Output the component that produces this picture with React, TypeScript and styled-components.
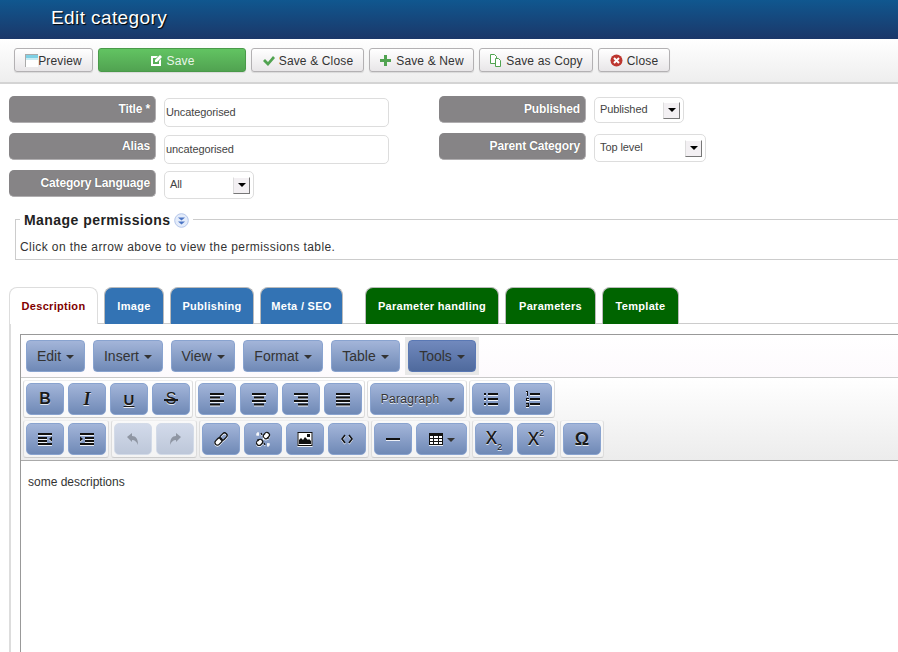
import React from "react";
import styled, { createGlobalStyle } from "styled-components";

const Global = createGlobalStyle`
  html, body { margin: 0; padding: 0; background: #fff; overflow: hidden; }
  body { font-family: "Liberation Sans", Arial, sans-serif; }
`;

const Page = styled.div`
  width: 898px; height: 652px; overflow: hidden; background: #fff;
  svg { flex-shrink: 0; }
`;
const Header = styled.header`
  height: 39px; display: flex; align-items: center; padding: 0 0 4px 51px; box-sizing: border-box;
  background: linear-gradient(#10578f, #1b3769);
`;
const Title = styled.h1`
  margin: 0; color: #fff; font-size: 19px; font-weight: normal; letter-spacing: .4px;
  text-shadow: 1px 1px 1px #000;
`;
const Toolbar = styled.div`
  height: 45px; box-sizing: border-box; padding: 9px 0 0 14px; display: flex; gap: 5px; align-items: flex-start;
  background: linear-gradient(#fff, #eee); border-bottom: 2px solid #d4d4d4;
`;
const ActionButton = styled.button<{ $primary?: boolean; $width: number }>`
  height: 24px; box-sizing: border-box; padding: 1px 0 0; display: inline-flex; align-items: center; justify-content: center; gap: 4px;
  width: ${p => p.$width}px; white-space: nowrap;
  font: 12px "Liberation Sans", Arial, sans-serif; letter-spacing: .15px;
  border-radius: 3px; box-shadow: 0 1px 1px rgba(0,0,0,.1);
  color: ${p => (p.$primary ? "#e8f5e8" : "#333")};
  border: 1px solid ${p => (p.$primary ? "#4a9a4a" : "#b3b1b3")};
  background: ${p => (p.$primary ? "linear-gradient(#62c462, #51a351)" : "linear-gradient(#fff, #e8e6e8)")};
`;
const PreviewButton = styled(ActionButton)`
  gap: 0;
`;
const Form = styled.div`
  padding-top: 12px; display: grid; grid-template-columns: 430px 1fr; padding-left: 9px;
`;
const Column = styled.div`
  display: flex; flex-direction: column;
`;
const Field = styled.div`
  height: 37px; display: flex; gap: 8px; align-items: flex-start;
`;
const Label = styled.label`
  width: 147px; height: 27px; box-sizing: border-box; padding: 0 5px 1px 0; display: flex; align-items: center; justify-content: flex-end;
  background: #868486; border: 1px solid #b0aeb0; border-width: 0 1px 1px 0; border-radius: 5px;
  color: #fff; font-size: 12px; font-weight: bold; letter-spacing: -.15px; text-shadow: 0 0 1px rgba(0,0,0,.4);
`;
const Input = styled.input`
  width: 225px; height: 29px; box-sizing: border-box; margin-top: 2px; padding: 0 1px 2px; outline: none;
  border: 1px solid #ddd; border-radius: 5px; color: #444; background: #fff;
  font: 11px "Liberation Sans", Arial, sans-serif; letter-spacing: -.1px;
`;
const Select = styled.div<{ $width: number; $height: number; $top: number }>`
  width: ${p => p.$width}px; height: ${p => p.$height}px; margin-top: ${p => p.$top}px; box-sizing: border-box;
  padding: 0 3px 0 5px; display: flex; align-items: center; justify-content: space-between;
  border: 1px solid #ddd; border-radius: 5px; color: #444; background: #fff; font-size: 11px; letter-spacing: -.1px;
`;
const SelectLabel = styled.span`
  margin-top: -2px;
`;
const SelectArrow = styled.span`
  width: 17px; height: 17px; box-sizing: border-box; display: flex; align-items: center; justify-content: center;
  background: #f3f0f3; border: 1px solid; border-color: #fff #777 #777 #ddd;
  &::after { content: ""; border: 4px solid transparent; border-top: 4px solid #000; border-bottom: 0; }
`;
const Permissions = styled.fieldset`
  margin: 2px 0 0 15px; padding: 11px 4px 0 4px; width: 1000px; box-sizing: border-box;
  border: 1px solid #ccc; height: 51px;
`;
const Legend = styled.legend`
  padding: 2px 4px 0; box-sizing: border-box; margin-left: 0; display: flex; align-items: center; gap: 3px; height: 20px;
  font-size: 14px; font-weight: bold; color: #222; letter-spacing: .45px;
`;
const Hint = styled.p`
  margin: 0; font-size: 12px; color: #333; letter-spacing: .41px;
`;
const Tabs = styled.nav`
  margin: 27px 0 0 9px; height: 37px; box-sizing: border-box; display: flex; gap: 6px; border-bottom: 1px solid #ccc;
`;
const Tab = styled.div<{ $bg?: string; $spaced?: boolean; $width: number }>`
  width: ${p => p.$width}px; height: 37px; box-sizing: border-box; display: flex; align-items: center; justify-content: center;
  margin-left: ${p => (p.$spaced ? 16 : 0)}px;
  padding-bottom: 1px;
  background: ${p => p.$bg ?? "#fff"}; color: ${p => (p.$bg ? "#fff" : "#800000")};
  border: 1px solid ${p => (p.$bg ? "#bbb" : "#ddd")}; border-bottom: 0; border-radius: 8px 8px 0 0;
  font-size: 11px; font-weight: bold; letter-spacing: .3px;
`;
const Panel = styled.div`
  margin-left: 9px; padding: 10px 0 0 10px; border-left: 2px solid #ddd; box-sizing: border-box; width: 1000px;
`;
const Editor = styled.div`
  margin-left: -1px; border: 1px solid #999;
`;
const MenuBar = styled.div`
  height: 43px; box-sizing: border-box; padding: 5px 0 0 5px; display: flex; gap: 8px; align-items: flex-start;
  background: linear-gradient(#fff, #fdfafd); border-bottom: 1px solid #c8c8c8;
`;
const MenuHighlight = styled.div`
  margin: -3px; padding: 3px; background: #e8e8e8;
`;
const MenuButton = styled.div<{ $active?: boolean; $width: number }>`
  width: ${p => p.$width}px; height: 32px; box-sizing: border-box; display: flex; align-items: center; justify-content: center; gap: 5px;
  font-size: 14px; color: #333; border-radius: 4px;
  border: 1px solid ${p => (p.$active ? "#5a78b4" : "#89a3cf")};
  background: ${p => (p.$active ? "linear-gradient(#7189bd, #4f6a9d)" : "linear-gradient(#a3b5d9, #6f89b6)")};
`;
const Caret = styled.span`
  display: inline-block; border: 4.500px solid transparent; border-top: 4px solid #333; border-bottom: 0; margin-top: 1px;
`;
const EditorTools = styled.div`
  padding: 2px 0 2px 2px; display: flex; flex-direction: column; gap: 2px;
  background: linear-gradient(#fff, #ececec); border-bottom: 1px solid #aaa;
`;
const ToolRow = styled.div`
  display: flex; gap: 2px;
`;
const ToolGroup = styled.div`
  display: flex; gap: 4px; padding: 2px; border: 1px solid #e2e2e2; border-color: #eee #ddd #ccc #ddd; border-radius: 3px;
  background: rgba(255,255,255,.4);
`;
const ToolButton = styled.div<{ $disabled?: boolean; $width?: number }>`
  width: ${p => p.$width ?? 38}px; height: 32px; box-sizing: border-box; display: flex; align-items: center; justify-content: center; gap: 4px;
  border-radius: 5px; color: #1a1a1a; 
  border: 1px solid ${p => (p.$disabled ? "#d3dbe8" : "#89a3cf")};
  background: ${p => (p.$disabled ? "linear-gradient(#d2daea, #bdc7d9)" : "linear-gradient(#a3b5d9, #6f89b6)")};
  font-size: 15px; text-shadow: 0 1px 0 rgba(255,255,255,.8);
  svg { filter: ${p => (p.$disabled ? "none" : "drop-shadow(0 1px 0 rgba(255,255,255,.85))")}; }
`;
const BoldGlyph = styled.span`
  font: bold 16px "Liberation Sans", Arial, sans-serif;
`;
const ItalicGlyph = styled.span`
  font: italic bold 18px "Liberation Serif", "Times New Roman", serif;
`;
const UnderGlyph = styled.span`
  font: bold 15px "Liberation Sans", Arial, sans-serif; text-decoration: underline;
`;
const StrikeGlyph = styled.span`
  font: 16px "Liberation Sans", Arial, sans-serif; position: relative;
  &::after { content: ""; position: absolute; left: -2px; right: -2px; top: 9px; height: 1.500px; background: #1a1a1a; }
`;
const ScriptGlyph = styled.span`
  font: 23px "Liberation Sans", Arial, sans-serif; line-height: 18px; margin-top: -5px;
  sub, sup { font-size: 9px; line-height: 0; }
`;
const OmegaGlyph = styled.span`
  font: bold 18px "Liberation Sans", Arial, sans-serif;
`;
const ParagraphText = styled.span`
  font-size: 12px; color: #333; letter-spacing: .3px; margin: 0 4px 0 2px;
`;
const Content = styled.div`
  height: 300px; padding: 14px 7px; font: 12px "Liberation Sans", Arial, sans-serif; color: #333; line-height: 14px; background: #fff;
`;

const Sv = ({ w = 16, h = 16, children, ...rest }: any) => (
  <svg width={w} height={h} viewBox={`0 0 ${w} ${h}`} {...rest}>{children}</svg>
);
const Lines = ({ rows }: { rows: [number, number][] }) => (
  <Sv>{rows.map(([x, w], i) => <rect key={i} x={x} y={2 + i * 3.5} width={w} height={2} fill="#111" />)}</Sv>
);

const PreviewIcon = () => (
  <Sv w={13} h={13}>
    <rect x="0" y="0" width="13" height="13" fill="#fff" />
    <rect x="0" y="1" width="13" height="3" fill="#7fd0e4" />
    <rect x="0" y="4" width="13" height="2" fill="#c8ecf4" />
    <rect x="0" y="0" width="1" height="13" fill="#aaa" />
    <rect x="0" y="0" width="13" height="1" fill="#aaa" />
  </Sv>
);
const SaveIcon = () => (
  <Sv w={13} h={13}>
    <path d="M1 2h7L6 4H3v6h6V7l2-2v7H1z" fill="#fff" />
    <path d="M5 6l5-5 2 2-5 5H5z" fill="#fff" />
  </Sv>
);
const CheckIcon = () => (
  <Sv w={13} h={13}><path d="M1 7l2-2 3 3 5-6 2 2-7 8z" fill="#51a351" /></Sv>
);
const PlusIcon = () => (
  <Sv w={13} h={13}><path d="M5 1h3v4h4v3H8v4H5V8H1V5h4z" fill="#51a351" /></Sv>
);
const CopyIcon = () => (
  <Sv w={13} h={13}>
    <path d="M1.500.5h4l2 2v7h-6z" fill="#fff" stroke="#51a351" />
    <path d="M6.500 4.500h3l2 2v6h-5z" fill="#fff" stroke="#51a351" />
  </Sv>
);
const CloseIcon = () => (
  <Sv w={13} h={13}>
    <circle cx="6.500" cy="6.500" r="6" fill="#bd362f" />
    <path d="M4 4l5 5M9 4l-5 5" stroke="#fff" strokeWidth="2" />
  </Sv>
);
const ExpandIcon = () => (
  <Sv w={15} h={15}>
    <circle cx="7.500" cy="7.500" r="6.800" fill="#e4ecfa" stroke="#b4c6ea" />
    <path d="M4 4.500h7L7.500 7.500z" fill="#4a74c4" />
    <path d="M4 8.500h7L7.500 11.500z" fill="#4a74c4" />
  </Sv>
);
const IndentOut = () => (
  <Sv>
    <rect x="1" y="2" width="14" height="2" fill="#111" /><rect x="1" y="6" width="9" height="2" fill="#111" />
    <rect x="1" y="9" width="9" height="2" fill="#111" /><rect x="1" y="12" width="14" height="2" fill="#111" />
    <path d="M15 5.500v5l-3-2.500z" fill="#111" />
  </Sv>
);
const IndentIn = () => (
  <Sv>
    <rect x="1" y="2" width="14" height="2" fill="#111" /><rect x="6" y="6" width="9" height="2" fill="#111" />
    <rect x="6" y="9" width="9" height="2" fill="#111" /><rect x="1" y="12" width="14" height="2" fill="#111" />
    <path d="M1 5.500v5l3-2.500z" fill="#111" />
  </Sv>
);
const UndoIcon = () => (
  <Sv><path d="M2 6l5-4v3c4 0 6 3 6 9-1-3-3-5-6-5v2z" fill="#8f96a3" /></Sv>
);
const RedoIcon = () => (
  <Sv><path d="M14 6L9 2v3c-4 0-6 3-6 9 1-3 3-5 6-5v2z" fill="#8f96a3" /></Sv>
);
const LinkIcon = () => (
  <Sv>
    <g fill="none" stroke="#111" strokeWidth="1.300" transform="rotate(-45 8 8)">
      <rect x="0.500" y="5.500" width="8" height="5" rx="2.400" fill="#fff" />
      <rect x="7.500" y="5.500" width="8" height="5" rx="2.400" />
    </g>
  </Sv>
);
const UnlinkIcon = () => (
  <Sv>
    <g fill="#fff" stroke="#111" strokeWidth="1.300" transform="rotate(-45 8 8)">
      <rect x="0" y="5.500" width="6.500" height="5" rx="2.400" />
      <rect x="9.500" y="5.500" width="6.500" height="5" rx="2.400" />
    </g>
    <path d="M3 1v3M1 3h3M13 15v-3M15 13h-3M8 7l1 1M11 2l1 2M2 11l2 1" stroke="#fff" strokeWidth="1.200" />
    <path d="M6 2l1 2M14 7l-2 0M2 9l2 0M10 14l-1-2" stroke="#111" strokeWidth="1.200" />
  </Sv>
);
const ImageIcon = () => (
  <Sv>
    <rect x="1" y="1.500" width="14" height="13" fill="#fff" stroke="#111" />
    <path d="M2 13V9l2-2 2 2 2-3 3 3 1-1 2 2v3z" fill="#111" />
    <rect x="10" y="3" width="3" height="3" fill="#111" />
  </Sv>
);
const CodeIcon = () => (
  <Sv><path d="M6 4L3 8l3 4M10 4l3 4-3 4" fill="none" stroke="#111" strokeWidth="1.500" /></Sv>
);
const HrIcon = () => (
  <Sv><rect x="1" y="7" width="14" height="2" fill="#111" /></Sv>
);
const TableIcon = () => (
  <Sv w={14} h={12}>
    <rect x=".5" y=".5" width="13" height="11" fill="#fff" stroke="#111" />
    <rect x="0" y="0" width="14" height="3" fill="#111" />
    <path d="M0 5.500h14M0 8.500h14M4.500 3v8M9.500 3v8" stroke="#111" strokeWidth="1" />
  </Sv>
);
const BulletIcon = () => (
  <Sv>
    <rect x="1" y="2" width="2" height="2" fill="#111" /><rect x="1" y="7" width="2" height="2" fill="#111" /><rect x="1" y="12" width="2" height="2" fill="#111" />
    <rect x="5" y="2" width="10" height="2" fill="#111" /><rect x="5" y="7" width="10" height="2" fill="#111" /><rect x="5" y="12" width="10" height="2" fill="#111" />
  </Sv>
);
const NumberIcon = () => (
  <Sv>
    <path d="M1 0h2v5H2V1H1zM1 7h3v1H2v1h2v1H1zM1 12h3v4H1v-1h2v-.5H1v-1h2V13H1z" fill="#111" />
    <rect x="5" y="2" width="10" height="2" fill="#111" /><rect x="5" y="7" width="10" height="2" fill="#111" /><rect x="5" y="12" width="10" height="2" fill="#111" />
  </Sv>
);

export default function App() {
  return (
    <Page>
      <Global />
      <Header><Title>Edit category</Title></Header>
      <Toolbar>
        <PreviewButton $width={79}><PreviewIcon />Preview</PreviewButton>
        <ActionButton $primary $width={148}><SaveIcon />Save</ActionButton>
        <ActionButton $width={113}><CheckIcon />Save &amp; Close</ActionButton>
        <ActionButton $width={105}><PlusIcon />Save &amp; New</ActionButton>
        <ActionButton $width={114}><CopyIcon />Save as Copy</ActionButton>
        <ActionButton $width={72}><CloseIcon />Close</ActionButton>
      </Toolbar>
      <Form>
        <Column>
          <Field><Label>Title *</Label><Input readOnly value="Uncategorised" /></Field>
          <Field><Label>Alias</Label><Input readOnly value="uncategorised" /></Field>
          <Field><Label>Category Language</Label><Select $width={90} $height={28} $top={1}><SelectLabel>All</SelectLabel><SelectArrow /></Select></Field>
        </Column>
        <Column>
          <Field><Label>Published</Label><Select $width={90} $height={26} $top={1}><SelectLabel>Published</SelectLabel><SelectArrow /></Select></Field>
          <Field><Label>Parent Category</Label><Select $width={112} $height={28} $top={1}><SelectLabel>Top level</SelectLabel><SelectArrow /></Select></Field>
        </Column>
      </Form>
      <Permissions>
        <Legend>Manage permissions <ExpandIcon /></Legend>
        <Hint>Click on the arrow above to view the permissions table.</Hint>
      </Permissions>
      <Tabs>
        <Tab $width={89}>Description</Tab>
        <Tab $width={60} $bg="#3373b4">Image</Tab>
        <Tab $width={84} $bg="#3373b4">Publishing</Tab>
        <Tab $width={83} $bg="#3373b4">Meta / SEO</Tab>
        <Tab $width={134} $bg="#006400" $spaced>Parameter handling</Tab>
        <Tab $width={91} $bg="#006400">Parameters</Tab>
        <Tab $width={77} $bg="#006400">Template</Tab>
      </Tabs>
      <Panel>
        <Editor>
          <MenuBar>
            <MenuButton $width={59}>Edit <Caret /></MenuButton>
            <MenuButton $width={70}>Insert <Caret /></MenuButton>
            <MenuButton $width={64}>View <Caret /></MenuButton>
            <MenuButton $width={80}>Format <Caret /></MenuButton>
            <MenuButton $width={69}>Table <Caret /></MenuButton>
            <MenuHighlight><MenuButton $width={68} $active>Tools <Caret /></MenuButton></MenuHighlight>
          </MenuBar>
          <EditorTools>
            <ToolRow>
              <ToolGroup>
                <ToolButton><BoldGlyph>B</BoldGlyph></ToolButton>
                <ToolButton><ItalicGlyph>I</ItalicGlyph></ToolButton>
                <ToolButton><UnderGlyph>U</UnderGlyph></ToolButton>
                <ToolButton><StrikeGlyph>S</StrikeGlyph></ToolButton>
              </ToolGroup>
              <ToolGroup>
                <ToolButton><Lines rows={[[1, 14], [1, 10], [1, 14], [1, 10]]} /></ToolButton>
                <ToolButton><Lines rows={[[1, 14], [3, 10], [1, 14], [3, 10]]} /></ToolButton>
                <ToolButton><Lines rows={[[1, 14], [5, 10], [1, 14], [5, 10]]} /></ToolButton>
                <ToolButton><Lines rows={[[1, 14], [1, 14], [1, 14], [1, 14]]} /></ToolButton>
              </ToolGroup>
              <ToolGroup>
                <ToolButton $width={94}><ParagraphText>Paragraph</ParagraphText><Caret /></ToolButton>
              </ToolGroup>
              <ToolGroup>
                <ToolButton><BulletIcon /></ToolButton>
                <ToolButton><NumberIcon /></ToolButton>
              </ToolGroup>
            </ToolRow>
            <ToolRow>
              <ToolGroup>
                <ToolButton><IndentOut /></ToolButton>
                <ToolButton><IndentIn /></ToolButton>
              </ToolGroup>
              <ToolGroup>
                <ToolButton $disabled><UndoIcon /></ToolButton>
                <ToolButton $disabled><RedoIcon /></ToolButton>
              </ToolGroup>
              <ToolGroup>
                <ToolButton><LinkIcon /></ToolButton>
                <ToolButton><UnlinkIcon /></ToolButton>
                <ToolButton><ImageIcon /></ToolButton>
                <ToolButton><CodeIcon /></ToolButton>
              </ToolGroup>
              <ToolGroup>
                <ToolButton><HrIcon /></ToolButton>
                <ToolButton $width={51}><TableIcon /><Caret /></ToolButton>
              </ToolGroup>
              <ToolGroup>
                <ToolButton><ScriptGlyph>x<sub>2</sub></ScriptGlyph></ToolButton>
                <ToolButton><ScriptGlyph>x<sup>2</sup></ScriptGlyph></ToolButton>
              </ToolGroup>
              <ToolGroup>
                <ToolButton><OmegaGlyph>Ω</OmegaGlyph></ToolButton>
              </ToolGroup>
            </ToolRow>
          </EditorTools>
          <Content>some descriptions</Content>
        </Editor>
      </Panel>
    </Page>
  );
}
